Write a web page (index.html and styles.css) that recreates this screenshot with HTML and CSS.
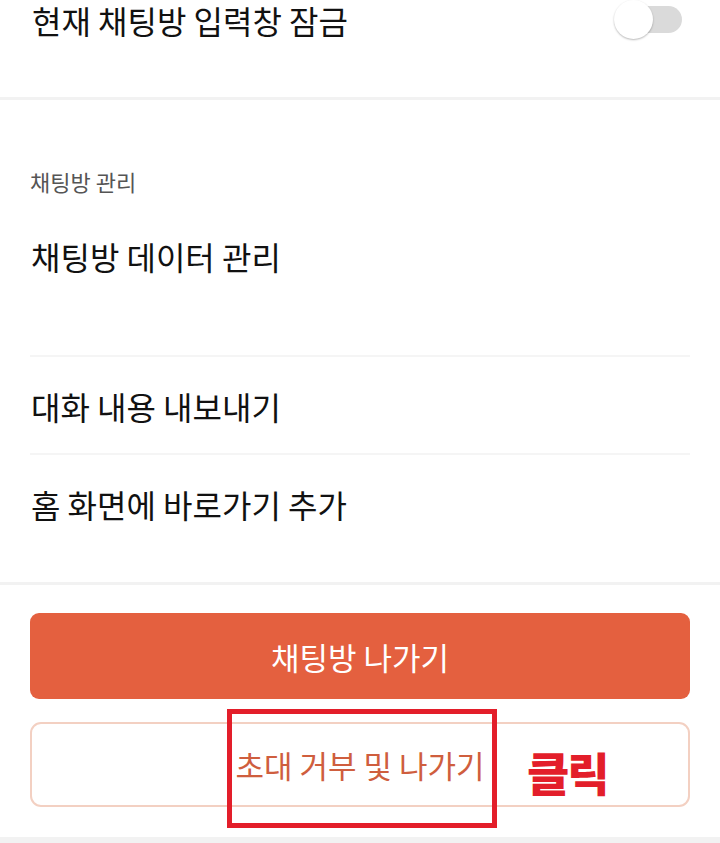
FILE: index.html
```html
<!DOCTYPE html>
<html>
  <head>
    <meta name="viewport" content="width=device-width, initial-scale=1" />
    <link rel="stylesheet" href="styles.css">
  </head>
  <body>
    <div class="lock-row">
      <span class="lock-title">현재 채팅방 입력창 잠금</span>
      <div class="switch">
        <div class="track"></div>
        <div class="knob"></div>
      </div>
    </div>

    <div class="divider"></div>

    <div class="section">
      <div class="section-label">채팅방 관리</div>
      <ul class="menu">
        <li class="first">채팅방 데이터 관리</li>
        <li>대화 내용 내보내기</li>
        <li class="last">홈 화면에 바로가기 추가</li>
      </ul>
    </div>

    <div class="divider"></div>

    <div class="buttons">
      <button class="leave-btn">채팅방 나가기</button>
      <button class="reject-btn">초대 거부 및 나가기</button>
      <div class="mark-box"></div>
      <div class="mark-text">클릭</div>
    </div>

    <div class="footer"></div>
  </body>
</html>
```

FILE: styles.css
```css
* {
  box-sizing: border-box;
}

body {
  margin: 0;
  background: #fff;
  font-family: "Noto Sans CJK KR", "Noto Sans", sans-serif;
  color: #111;
  overflow: hidden;
}

.lock-row {
  display: flex;
  justify-content: space-between;
  align-items: flex-start;
  height: 97px;
  padding: 0 38px 0 32px;
}

.lock-title {
  font-size: 32px;
  line-height: 40px;
}

.switch {
  position: relative;
  width: 69px;
  height: 40px;
}

.switch .track {
  position: absolute;
  right: 0;
  top: 6px;
  width: 58px;
  height: 27px;
  border-radius: 14px;
  background: #dadada;
}

.switch .knob {
  position: absolute;
  left: 1px;
  top: 0;
  width: 39px;
  height: 39px;
  border-radius: 50%;
  background: #fff;
  box-shadow: 0 1px 2px rgba(0, 0, 0, 0.28);
}

.divider {
  height: 3px;
  background: #f2f2f2;
}

.section {
  padding-top: 67px;
}

.section-label {
  padding-left: 30px;
  font-size: 22px;
  line-height: 28px;
  color: #555;
}

.menu {
  margin: 0 30px;
  padding: 0;
  list-style-type: none;
}

.menu li {
  font-size: 32px;
  line-height: 42px;
  padding: 28px 0 26px 1px;
  border-top: 2px solid #f5f5f5;
}

.menu li.first {
  padding-top: 40px;
  padding-bottom: 78px;
  border-top: none;
}

.menu li.last {
  padding-bottom: 57px;
}

.buttons {
  position: relative;
  display: flex;
  flex-direction: column;
  gap: 23px;
  padding: 28px 30px 30px;
}

.buttons button {
  font-family: inherit;
  font-size: 31px;
  width: 100%;
  cursor: pointer;
}

.leave-btn {
  height: 86px;
  border: none;
  border-radius: 9px;
  background: #e4603f;
  color: #fff;
}

.reject-btn {
  height: 85px;
  border: 2px solid #f3d0c2;
  border-radius: 11px;
  background: #fff;
  color: #cf5e3e;
}

.mark-box {
  position: absolute;
  left: 227px;
  top: 124px;
  width: 270px;
  height: 119px;
  border: 5px solid #e31e2a;
}

.mark-text {
  position: absolute;
  left: 527px;
  top: 160px;
  font-size: 46px;
  line-height: 52px;
  font-weight: 900;
  color: #e31e2a;
  letter-spacing: -2px;
}

.footer {
  height: 20px;
  background: #f2f2f2;
}
```
